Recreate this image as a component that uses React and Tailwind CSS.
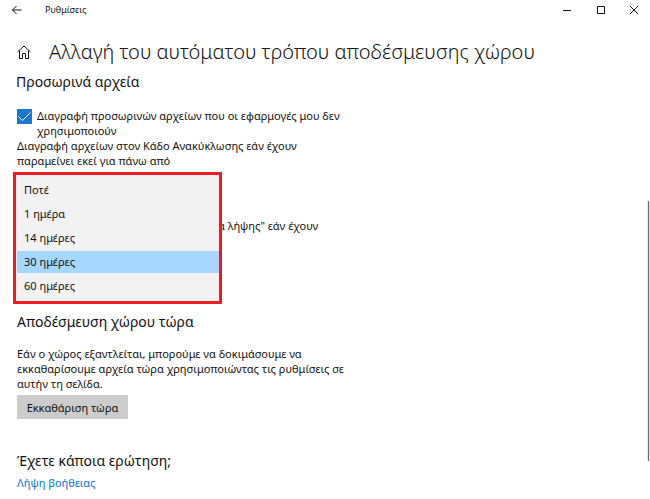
import { useState } from "react";

const periods = ["Ποτέ", "1 ημέρα", "14 ημέρες", "30 ημέρες", "60 ημέρες"];

const TitleBar = () => (
  <header className="flex h-5 items-center justify-between">
    <div className="flex items-center">
      <button type="button" aria-label="Πίσω" className="flex h-5 w-[34px] items-center justify-center">
        <svg viewBox="0 0 10 10" className="h-[10px] w-[10px]" fill="none" stroke="currentColor">
          <path d="M0.5 5H9.5M4.5 1L0.5 5L4.5 9" />
        </svg>
      </button>
      <span className="ml-[11px] text-[9px] leading-5">Ρυθμίσεις</span>
    </div>
    <div className="flex">
      <button type="button" aria-label="Ελαχιστοποίηση" className="flex h-5 w-[34px] items-center justify-center">
        <svg viewBox="0 0 8 8" className="h-2 w-2" stroke="currentColor">
          <path d="M0 4.5H8" />
        </svg>
      </button>
      <button type="button" aria-label="Μεγιστοποίηση" className="flex h-5 w-[34px] items-center justify-center">
        <svg viewBox="0 0 8 8" className="h-2 w-2" fill="none" stroke="currentColor">
          <path d="M0.5 0.5H7.5V7.5H0.5Z" />
        </svg>
      </button>
      <button type="button" aria-label="Κλείσιμο" className="flex h-5 w-8 items-center justify-center">
        <svg viewBox="0 0 8 8" className="h-2 w-2" fill="none" stroke="currentColor">
          <path d="M0 0L8 8M8 0L0 8" />
        </svg>
      </button>
    </div>
  </header>
);

const PeriodSelect = ({ id, value, onChange }) => (
  <select
    id={id}
    value={value}
    onChange={(event) => onChange(event.target.value)}
    className="block h-6 w-[205px] appearance-none border border-[#e0e0e0] bg-white px-2 text-[11px]"
  >
    {periods.map((period) => (
      <option key={period}>{period}</option>
    ))}
  </select>
);

const PeriodMenu = ({ value, onChange }) => (
  <ul
    role="listbox"
    aria-label="Χρονικό διάστημα"
    className="absolute -left-1 top-0 z-10 flex w-[209px] flex-col gap-[2px] border-3 border-[#ed1c24] bg-[#f2f2f2] py-1 pl-px"
  >
    {periods.map((period) => (
      <li key={period} role="option" aria-selected={period === value}>
        <button
          type="button"
          onClick={() => onChange(period)}
          className={`block h-[22px] w-full pl-[7px] text-left leading-[22px] ${
            period === value ? "bg-[#a6d8ff]" : ""
          }`}
        >
          {period}
        </button>
      </li>
    ))}
  </ul>
);

const App = () => {
  const [cleanTemp, setCleanTemp] = useState(true);
  const [recycle, setRecycle] = useState("30 ημέρες");
  const [downloads, setDownloads] = useState("Ποτέ");

  return (
    <div className="relative min-h-screen bg-white font-['Noto_Sans','Open_Sans',sans-serif] text-[11px] leading-[15px] text-[#111111]">
      <TitleBar />

      <main className="px-4 pt-4">
        <div className="flex h-8 items-center">
          <svg viewBox="0 0 14 14" className="ml-px h-[14px] w-[14px]" fill="none" stroke="currentColor">
            <path d="M0.5 7L7 1L13.5 7M2.5 5.5V13.5H5.5V8.5H8.5V13.5H11.5V5.5" />
          </svg>
          <h1 className="ml-[18px] whitespace-nowrap text-[20px] font-[350] leading-8">
            Αλλαγή του αυτόματου τρόπου αποδέσμευσης χώρου
          </h1>
        </div>

        <section>
          <h2 className="mt-1 text-[14px] leading-5">Προσωρινά αρχεία</h2>

          <label htmlFor="clean-temp" className="mt-4 flex items-start pl-px">
            <span className="relative mt-px h-[15px] w-[15px] shrink-0">
              <input
                id="clean-temp"
                type="checkbox"
                checked={cleanTemp}
                onChange={(event) => setCleanTemp(event.target.checked)}
                className="peer block h-[15px] w-[15px] appearance-none border border-black checked:border-[#1a78d4] checked:bg-[#1a78d4]"
              />
              <svg
                viewBox="0 0 15 15"
                className="pointer-events-none absolute inset-0 hidden h-[15px] w-[15px] text-white peer-checked:block"
                fill="none"
                stroke="currentColor"
              >
                <path d="M1.5 7.5L5.5 11.5L13.5 3.5" />
              </svg>
            </span>
            <span className="ml-[5px]">
              Διαγραφή προσωρινών αρχείων που οι εφαρμογές μου δεν
              <br />
              χρησιμοποιούν
            </span>
          </label>

          <label htmlFor="recycle" className="block pl-px">
            Διαγραφή αρχείων στον Κάδο Ανακύκλωσης εάν έχουν
            <br />
            παραμείνει εκεί για πάνω από
          </label>
          <div className="relative ml-px mt-1">
            <PeriodSelect id="recycle" value={recycle} onChange={setRecycle} />
            <PeriodMenu value={recycle} onChange={setRecycle} />
          </div>

          <label htmlFor="downloads" className="mt-[22px] block h-[30px] pl-[202px]">
            α λήψης" εάν έχουν
          </label>
          <div className="ml-px mt-1">
            <PeriodSelect id="downloads" value={downloads} onChange={setDownloads} />
          </div>
        </section>

        <section className="pl-px">
          <h2 className="mt-9 text-[14px] leading-5">Αποδέσμευση χώρου τώρα</h2>
          <p className="mt-[14px]">
            Εάν ο χώρος εξαντλείται, μπορούμε να δοκιμάσουμε να
            <br />
            εκκαθαρίσουμε αρχεία τώρα χρησιμοποιώντας τις ρυθμίσεις σε
            <br />
            αυτήν τη σελίδα.
          </p>
          <button type="button" className="mt-1 block h-6 w-[111px] bg-[#cccccc] text-center">
            Εκκαθάριση τώρα
          </button>
        </section>

        <section className="pl-px">
          <h2 className="mt-8 text-[14px] leading-5">Έχετε κάποια ερώτηση;</h2>
          <a href="#help" className="mt-1 block w-fit text-[#0078d7]">
            Λήψη βοήθειας
          </a>
        </section>
      </main>

      <div className="absolute right-0 top-[201px] h-[260px] w-[3px] border-x border-[#e6e6e6] bg-[#6b6b6b]" />
    </div>
  );
};

export default App;
